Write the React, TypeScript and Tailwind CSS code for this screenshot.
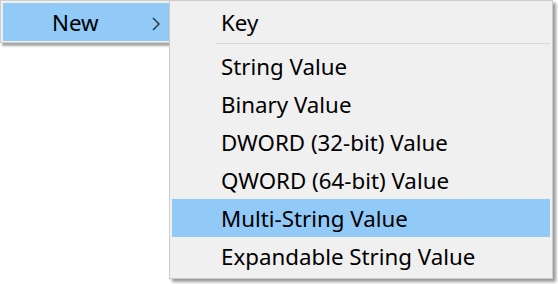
const items = [
  "String Value",
  "Binary Value",
  "DWORD (32-bit) Value",
  "QWORD (64-bit) Value",
  "Multi-String Value",
  "Expandable String Value",
];

export default function App() {
  const font = { fontFamily: '"Noto Sans", "Open Sans", sans-serif' };
  return (
    <div className="flex h-[284px] w-[558px] items-start bg-white text-[22.3px] text-black" style={font}>
      {/* parent menu */}
      <div className="h-[43px] w-[169px] border-b border-l border-t border-[#cfcfcf] bg-[#f0f0f0] pl-[2px] pt-[2px] shadow-[2px_3px_2px_rgba(0,0,0,0.35)]">
        <div className="flex h-[38px] items-center bg-[#91c9f7] pl-[49px] pr-[9px]">
          <span className="flex-1 pt-[2px]">New</span>
          <svg width="8" height="14" viewBox="0 0 8 14" className="mt-[3px]">
            <polyline points="1,1 7,7 1,13" fill="none" stroke="#2b2b2b" strokeWidth="1.4" />
          </svg>
        </div>
      </div>

      {/* submenu */}
      <div className="relative z-10 h-[279px] w-[384px] border border-[#cccccc] bg-[#f0f0f0] px-[2px] pb-[3px] pt-[2px] shadow-[3px_3px_3px_rgba(0,0,0,0.4)]">
        <div className="flex h-[38px] items-center pl-[49px] pt-[2px]">Key</div>
        <div className="ml-[44px] mb-[3px] mt-[2px] h-px bg-[#d7d7d7]" />
        {items.map((it) => (
          <div
            key={it}
            className={
              "flex h-[38px] items-center pl-[49px] pt-[2px] " +
              (it === "Multi-String Value" ? "bg-[#91c9f7]" : "")
            }
          >
            {it}
          </div>
        ))}
      </div>
    </div>
  );
}
